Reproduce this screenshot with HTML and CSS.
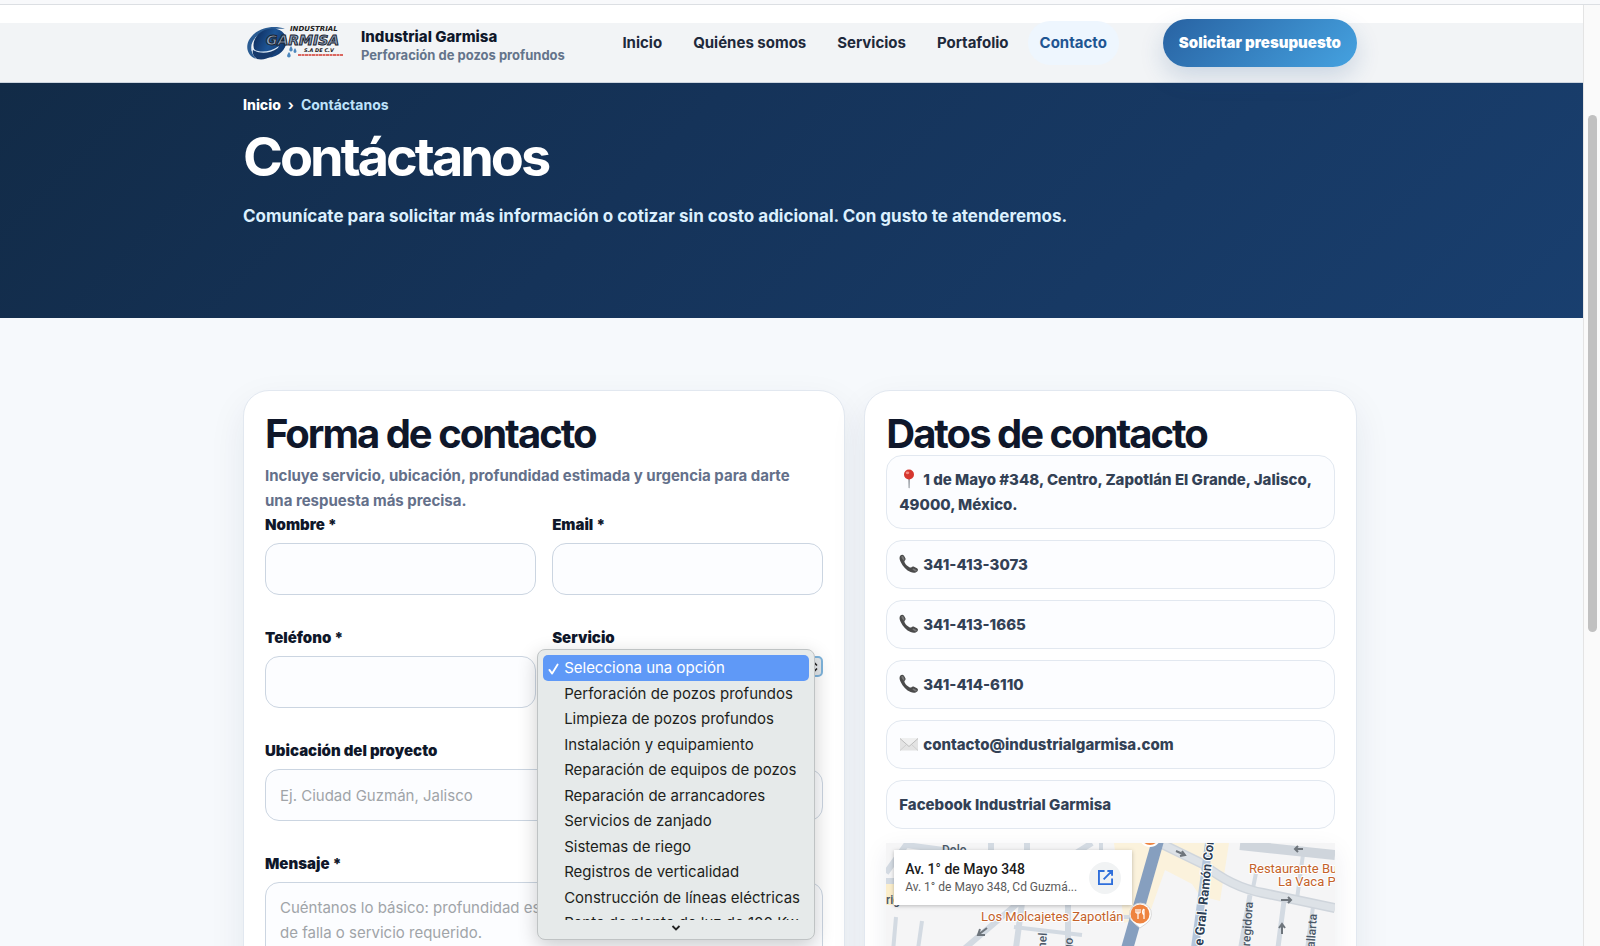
FILE: index.html
```html
<!DOCTYPE html>
<html lang="es">
<head>
<meta charset="utf-8">
<title>Contáctanos | Industrial Garmisa</title>
<link rel="stylesheet" href="styles.css">
</head>
<body>
<div class="chrome-edge"></div>
<div class="scrollbar"><div class="scrollbar-thumb"></div></div>

<svg class="sprite" aria-hidden="true">
  <symbol id="phone" viewBox="0 0 20 20">
    <path d="M1.4 1.6C2.4.6 4 .4 5 1.7l1.400 2.600c.6 1.200-.2 2-1 2.700-.2 1.200.9 3 2.200 4.200 1.300 1.300 3.200 2.500 4.600 2.300.8-.9 1.700-1.400 2.800-.8l3 1.600c1.300.8 1.200 2.300.2 3.200-1.600 1.600-4 1.800-6.600.6C7.400 16.300 3.800 12.400 1.700 8 .3 5.300.1 3 1.400 1.600z" fill="#4b4b4b"/>
    <path d="M2.200 2.600c.8-.9 1.700-.9 2.200.1l1 2c.3.8-.3 1.200-1 1.800C3.600 5.600 2.600 4 2.200 2.600zM13.400 15.300c.5-.8 1-1 1.700-.6l2.100 1.200c.9.500.8 1.200.1 1.700-1.500-.3-2.900-1.200-3.900-2.300z" fill="#777"/>
  </symbol>
</svg>

<header class="site-header">
  <div class="container header-row">
    <a class="brand" href="#">
      <svg class="logo" viewBox="0 0 100 36" role="img" aria-label="Industrial Garmisa S.A. de C.V.">
        <defs>
          <linearGradient id="globe" x1="0" y1="0" x2="1" y2="1">
            <stop offset="0" stop-color="#0b2450"/><stop offset=".5" stop-color="#1d5596"/><stop offset="1" stop-color="#0d2c5e"/>
          </linearGradient>
        </defs>
        <path d="M39 4C26-1 9 4 3 15c-4 8-1 16 7 19C4 27 3 18 11 11 18 5 29 3 39 4z" fill="#2b5c93"/>
        <ellipse cx="24" cy="18" rx="17" ry="14" transform="rotate(-25 24 18)" fill="url(#globe)"/>
        <path d="M6 23c6 5 17 5 27-2-3 7-15 11-24 8-3-2-4-3-3-6z" fill="#dbe8f5"/>
        <path d="M7 25c7 4 16 4 25-2-3 8-12 13-21 11-3-2-5-5-4-9z" fill="#16396b"/>
        <path d="M45 21c2 3 2.500 5 0 5.500-2.500-.5-2-2.500 0-5.500zM49 23c2 3 2 4.500 0 5-2-.5-2-2 0-5zM43 27c2 3 2.500 5 0 5.500-3-.5-2-2.500 0-5.500z" fill="#4d87bd"/>
        <text x="44" y="6" class="logo-top">INDUSTRIAL</text>
        <text x="20" y="20" class="logo-name">GARMISA</text>
        <text x="58" y="27" class="logo-sub">S.A DE C.V</text>
        <path d="M52 30h45" stroke="#d2382f" stroke-width="1.600" stroke-dasharray="3 .5"/>
      </svg>
      <span class="brand-text">
        <strong class="brand-name">Industrial Garmisa</strong>
        <span class="brand-tag">Perforación de pozos profundos</span>
      </span>
    </a>
    <nav class="nav" aria-label="Principal">
      <a class="nav-link" href="#">Inicio</a>
      <a class="nav-link" href="#">Quiénes somos</a>
      <a class="nav-link" href="#">Servicios</a>
      <a class="nav-link" href="#">Portafolio</a>
      <a class="nav-link nav-link-active" href="#" aria-current="page">Contacto</a>
    </nav>
    <a class="cta" href="#">Solicitar presupuesto</a>
  </div>
</header>

<section class="hero">
  <div class="container">
    <nav class="crumbs" aria-label="Ruta">
      <a class="crumb-home" href="#">Inicio</a><span>›</span><span class="crumb-here">Contáctanos</span>
    </nav>
    <h1 class="hero-title">Contáctanos</h1>
    <p class="hero-text">Comunícate para solicitar más información o cotizar sin costo adicional. Con gusto te atenderemos.</p>
  </div>
</section>

<main class="container panels">
  <section class="card">
    <h2 class="card-title">Forma de contacto</h2>
    <p class="card-intro">Incluye servicio, ubicación, profundidad estimada y urgencia para darte una respuesta más precisa.</p>
    <form class="form">
      <div class="field">
        <label class="label" for="nombre">Nombre *</label>
        <input class="input" id="nombre" type="text">
      </div>
      <div class="field">
        <label class="label" for="email">Email *</label>
        <input class="input" id="email" type="email">
      </div>
      <div class="field">
        <label class="label" for="telefono">Teléfono *</label>
        <input class="input" id="telefono" type="tel">
      </div>
      <div class="field field-service">
        <label class="label" for="servicio">Servicio</label>
        <div class="select-wrap">
          <select class="select" id="servicio">
            <option>Selecciona una opción</option>
          </select>
          <svg class="select-arrows" viewBox="0 0 8 12" aria-hidden="true"><path d="M1 4.500l3-3 3 3M1 7.500l3 3 3-3" fill="none" stroke="#222" stroke-width="1.600"/></svg>
        </div>
        <div class="menu">
          <ul class="menu-list" role="listbox" aria-label="Servicio">
            <li class="option option-selected" role="option" aria-selected="true"><svg class="check" viewBox="0 0 12 13" aria-hidden="true"><path d="M1.500 7.500l3 4L10.500 1.500" fill="none" stroke="#fff" stroke-width="2" stroke-linecap="round" stroke-linejoin="round"/></svg>Selecciona una opción</li>
            <li class="option" role="option">Perforación de pozos profundos</li>
            <li class="option" role="option">Limpieza de pozos profundos</li>
            <li class="option" role="option">Instalación y equipamiento</li>
            <li class="option" role="option">Reparación de equipos de pozos</li>
            <li class="option" role="option">Reparación de arrancadores</li>
            <li class="option" role="option">Servicios de zanjado</li>
            <li class="option" role="option">Sistemas de riego</li>
            <li class="option" role="option">Registros de verticalidad</li>
            <li class="option" role="option">Construcción de líneas eléctricas</li>
            <li class="option" role="option">Renta de planta de luz de 100 Kw</li>
          </ul>
          <svg class="menu-more" viewBox="0 0 10 6" aria-hidden="true"><path d="M1.500 1l3.500 3.500L8.500 1" fill="none" stroke="#222" stroke-width="1.800"/></svg>
        </div>
      </div>
      <div class="field field-wide">
        <label class="label" for="ubicacion">Ubicación del proyecto</label>
        <input class="input" id="ubicacion" type="text" placeholder="Ej. Ciudad Guzmán, Jalisco">
      </div>
      <div class="field field-wide">
        <label class="label" for="mensaje">Mensaje *</label>
        <textarea class="input textarea" id="mensaje" placeholder="Cuéntanos lo básico: profundidad estimada, ubicación, diámetros y tipo de falla o servicio requerido."></textarea>
      </div>
    </form>
  </section>

  <section class="card">
    <h2 class="card-title">Datos de contacto</h2>
    <ul class="contact-list">
      <li class="contact-item"><svg class="emoji" viewBox="0 0 20 20" aria-hidden="true"><path d="M9.300 9h1.600l-.3 9.500-.5 1-.5-1z" fill="#8c9299"/><circle cx="10" cy="5.500" r="5" fill="#d6372f"/><ellipse cx="8.500" cy="3.800" rx="1.800" ry="1.400" fill="#f28b82"/></svg>1 de Mayo #348, Centro, Zapotlán El Grande, Jalisco, 49000, México.</li>
      <li class="contact-item"><svg class="emoji" aria-hidden="true"><use href="#phone"/></svg>341-413-3073</li>
      <li class="contact-item"><svg class="emoji" aria-hidden="true"><use href="#phone"/></svg>341-413-1665</li>
      <li class="contact-item"><svg class="emoji" aria-hidden="true"><use href="#phone"/></svg>341-414-6110</li>
      <li class="contact-item"><svg class="emoji" viewBox="0 0 20 20" aria-hidden="true"><path d="M1 4.500h18v12H1z" fill="#e3e3e3"/><path d="M1 16.500l6.500-6M19 16.500l-6.500-6" stroke="#cfcfcf" fill="none"/><path d="M1 4.500l9 8 9-8" stroke="#bdbdbd" fill="#efefef"/></svg>contacto@industrialgarmisa.com</li>
      <li class="contact-item"><a class="contact-link" href="#">Facebook Industrial Garmisa</a></li>
    </ul>
    <div class="map">
      <svg class="map-art" viewBox="0 0 449 320" preserveAspectRatio="xMinYMin slice" role="img" aria-label="Mapa de Ciudad Guzmán">
        <rect width="449" height="320" fill="#f5f5f6"/>
        <path d="M228 0h115l-9 58-20-5-8-12-27-14-16 45-25 8z" fill="#fbf2dc"/>
        <path d="M0 40h14v22H0z" fill="#fbeecb"/>
        <g fill="none" stroke="#d3dae2" stroke-width="6">
          <path d="M0 30L20 2l60 8M105 0v12M141 0v10M190 10L206 0M78 106L132 60M136 60l-8 60M182 60v60M0 38h12"/>
          <path d="M128 84l68 8M10 74L6 120M36 78l-6 42M222 74h24M215 0v12" stroke-width="4"/>
          <path d="M370 30l-4 20M418 4l-7 52M427 64l-8 56" stroke-width="4"/>
          <path d="M398 58l-8 62M364 52l-12 68" stroke-width="5"/>
        </g>
        <path d="M262-6l14 7 41 20c22 18 44 26 60 29l72 15M354 2l95 10" fill="none" stroke="#cfd5dc" stroke-width="10"/>
        <path d="M262-6l14 7 41 20c22 18 44 26 60 29l72 15" fill="none" stroke="#dde2e7" stroke-width="7"/>
        <path d="M273-6l-36 126" stroke="#869fbf" stroke-width="12"/>
        <path d="M323 0l-16 120" stroke="#b4c5da" stroke-width="8"/>
        <path d="M290 8l9 4m-3-4l3 4-5 1M395 57h10m-3-3l3 3-3 3M417 6h-8m3-3l-3 3 3 3M396 91v-10m-3 4l3-4 3 4M92 92l9-7m-7 1l-2 6 7 0" fill="none" stroke="#6e757c" stroke-width="2"/>
        <g class="map-street">
          <text x="56" y="11">Dolo</text>
          <text x="0" y="61">rigo</text>
          <text x="238" y="41">o</text>
        </g>
        <g class="map-street map-street-up">
          <text transform="translate(161 90) rotate(-86)">Coronel</text>
          <text transform="translate(187 95) rotate(-86)">Hidalgo</text>
          <text transform="translate(367 59) rotate(-86)">Corregidora</text>
          <text transform="translate(431 71) rotate(-86)">Vallarta</text>
        </g>
        <text class="map-avenue" transform="translate(317 103) rotate(-84)">e Gral. Ramón Corona</text>
        <g class="map-place">
          <text x="95" y="78">Los Molcajetes Zapotlán</text>
          <text x="363" y="30">Restaurante Bugambilias</text>
          <text x="392" y="43">La Vaca Parrilla</text>
        </g>
        <path d="M254 85l-6-5a11 11 0 1 1 13 0z" fill="#fff" stroke="#d9d9d9"/>
        <circle cx="254" cy="71" r="9.500" fill="#ee8440"/>
        <path d="M250 66v4m2-4v4m2-4v4m-4 0h4m-2 0v6M258 66v10m0-10c-2 1-2 4 0 6" stroke="#fff" stroke-width="1.200" fill="none"/>
        <circle cx="264" cy="-7" r="11" fill="#fff"/><circle cx="264" cy="-7" r="9" fill="#ee8440"/>
      </svg>
      <div class="map-card">
        <div class="map-address">
          <strong class="map-title">Av. 1° de Mayo 348</strong>
          <span class="map-sub">Av. 1° de Mayo 348, Cd Guzmá...</span>
        </div>
        <a class="map-open" href="#" aria-label="Abrir en Maps">
          <svg class="map-open-icon" viewBox="0 0 16 16"><path d="M7 1H1v14h14V9M10 1h5v5M15 1L6 10" fill="none" stroke="#2f6fdb" stroke-width="2"/></svg>
        </a>
      </div>
    </div>
  </section>
</main>
</body>
</html>
```
FILE: styles.css
```css
* { box-sizing: border-box; }

html { height: 100%; overflow: hidden; }

body {
  position: relative;
  min-height: 100%;
  margin: 0;
  background: #f6f9fc;
  color: #0f172a;
  font: 400 15px/24px Inter, "Liberation Sans", sans-serif;
}

a { color: inherit; text-decoration: none; }
h1, h2, p, ul { margin: 0; padding: 0; }
ul { list-style: none; }

.sprite { position: absolute; width: 0; height: 0; }

.chrome-edge {
  height: 5px;
  background: #f8f9fb;
  border-bottom: 1px solid #dcdfe3;
}

.scrollbar {
  position: fixed;
  top: 5px;
  right: 0;
  bottom: 0;
  z-index: 10;
  width: 17px;
  padding: 110px 3px 0 4px;
  background: #fafafa;
  border-left: 1px solid #e4e4e4;
}

.scrollbar-thumb {
  width: 9px;
  height: 517px;
  border-radius: 5px;
  background: #c1c1c1;
}

.container { width: 1114px; max-width: 92%; margin: 0 auto; }

.site-header {
  padding: 14px 0 15px;
  background: linear-gradient(#fff 18px, #f2f4f6 18px);
  border-bottom: 1px solid #cdd5df;
}

.header-row { display: flex; align-items: center; }

.brand { display: flex; align-items: center; gap: 15px; padding-left: 3px; }
.logo { width: 100px; height: 36px; }
.logo-top { font: italic 700 7px "DejaVu Sans", sans-serif; fill: #222; }
.logo-name { font: italic 700 14px "DejaVu Sans", sans-serif; fill: #8fa3bd; stroke: #1b2430; stroke-width: 1px; }
.logo-sub { font: italic 700 5px "DejaVu Sans", sans-serif; fill: #222; }
.brand-text { display: flex; flex-direction: column; padding-top: 5px; }
.brand-name { font-size: 15px; font-weight: 800; line-height: 19px; }
.brand-tag { font-size: 13px; font-weight: 700; line-height: 19px; color: #64748b; }

.nav { display: flex; gap: 7px; margin: 0 44px 0 auto; }
.nav-link {
  padding: 10px 12px;
  border-radius: 22px;
  font-weight: 700;
  color: #1e293b;
}
.nav-link-active { background: #eef6fe; color: #1f5592; }

.cta {
  padding: 12px 16px;
  border-radius: 24px;
  background: linear-gradient(135deg, #2862a2, #45a2e0);
  box-shadow: 0 10px 24px rgba(30, 80, 140, .18);
  color: #fff;
  font-weight: 900;
}

.hero {
  padding: 10px 0 88px;
  background: linear-gradient(135deg, #122b47, #153359 40%, #193f6f);
  color: #fff;
}
.crumbs { display: flex; gap: 7px; font-size: 14px; font-weight: 700; }
.crumb-home { font-weight: 800; }
.crumb-here { color: #bfe3fb; }
.hero-title { margin-top: 10px; font-size: 54px; font-weight: 700; line-height: 60px; letter-spacing: -3px; }
.hero-text { margin-top: 15px; font-size: 17px; font-weight: 700; line-height: 28px; color: #dcf0fe; }

.panels { display: grid; grid-template-columns: 11fr 9fr; gap: 19px; align-items: start; padding-top: 72px; }

.card {
  min-width: 0;
  padding: 21px;
  background: #fff;
  border: 1px solid #e2e8f0;
  border-radius: 26px;
  box-shadow: 0 14px 36px rgba(15, 40, 80, .08);
}
.card-title { font-size: 40px; font-weight: 700; line-height: 43px; letter-spacing: -2px; }
.card-intro { max-width: 540px; margin-top: 8px; font-weight: 700; line-height: 25px; color: #64708a; }

.form { display: grid; grid-template-columns: 1fr 1fr; gap: 31px 16px; }
.field { display: flex; flex-direction: column; gap: 6px; min-width: 0; }
.field-wide { grid-column: 1 / -1; }
.field-service { position: relative; }
.label { font-weight: 900; }

.input {
  width: 100%;
  height: 52px;
  padding: 12px 14px;
  border: 1px solid #cbd5e1;
  border-radius: 14px;
  background: #fcfdff;
  color: #0f172a;
  font: inherit;
}
.input::placeholder { color: #a0a4a8; }
.textarea { height: 140px; line-height: 25px; resize: none; }

.select-wrap { position: relative; }
.select {
  display: block;
  width: 100%;
  height: 21px;
  padding: 0 6px;
  appearance: none;
  border: 2px solid #7eb4dc;
  border-radius: 5px;
  background: #e4e8eb;
  color: #222;
  font: 400 13px/16px Inter, sans-serif;
}
.select-arrows { position: absolute; top: 5px; right: 5px; width: 8px; height: 12px; }

.menu {
  position: absolute;
  top: 23px;
  left: -15px;
  z-index: 5;
  width: 278px;
  padding: 5px 5px 6px;
  background: #e6eaea;
  border: 1px solid #bfc3c4;
  border-radius: 8px;
  box-shadow: 0 6px 20px rgba(0, 0, 0, .2);
  color: #1d1f20;
}
.menu-list { height: 265px; overflow: hidden; }
.option { position: relative; height: 26px; padding-left: 21px; line-height: 26px; white-space: nowrap; }
.option:nth-child(even) { height: 25px; line-height: 25px; }
.option-selected { border-radius: 5px; background: #5f99f7; color: #fff; }
.check { position: absolute; top: 8px; left: 5px; width: 11px; height: 12px; }
.menu-more { display: block; width: 10px; height: 6px; margin: 5px auto 2px; }

.contact-list { display: flex; flex-direction: column; gap: 11px; }
.contact-item {
  padding: 11px 12px;
  border: 1px solid #e2e8f0;
  border-radius: 16px;
  background: #fcfdff;
  color: #334155;
  font-weight: 800;
  line-height: 25px;
}
.emoji { width: 20px; height: 20px; margin-right: 4px; vertical-align: -4px; }

.map {
  position: relative;
  height: 320px;
  margin-top: 14px;
  overflow: hidden;
  box-shadow: 0 8px 24px rgba(15, 40, 80, .08);
}
.map-art { display: block; width: 100%; height: 100%; }
.map-street { font: 500 12px Roboto, sans-serif; fill: #4a5868; }
.map-street-up { text-anchor: end; }
.map-avenue { font: 700 13px Roboto, sans-serif; fill: #2c3e55; stroke: #fff; stroke-width: 2px; paint-order: stroke; }
.map-place { font: 400 13px Roboto, sans-serif; fill: #c4622a; stroke: #fff; stroke-width: 2px; paint-order: stroke; }

.map-card {
  position: absolute;
  top: 7px;
  left: 8px;
  display: flex;
  align-items: center;
  justify-content: space-between;
  width: 238px;
  padding: 10px 11px;
  background: #fff;
  box-shadow: 0 1px 4px rgba(0, 0, 0, .25);
}
.map-address { display: flex; flex-direction: column; font-family: Roboto, sans-serif; }
.map-title { font-size: 14px; font-weight: 500; line-height: 19px; color: #1b1b1b; }
.map-sub { font-size: 12px; line-height: 16px; color: #5b5b5b; white-space: nowrap; }
.map-open {
  display: grid;
  place-items: center;
  width: 32px;
  height: 32px;
  border-radius: 50%;
  background: #f1f3f4;
}
.map-open-icon { width: 15px; height: 15px; }
```
